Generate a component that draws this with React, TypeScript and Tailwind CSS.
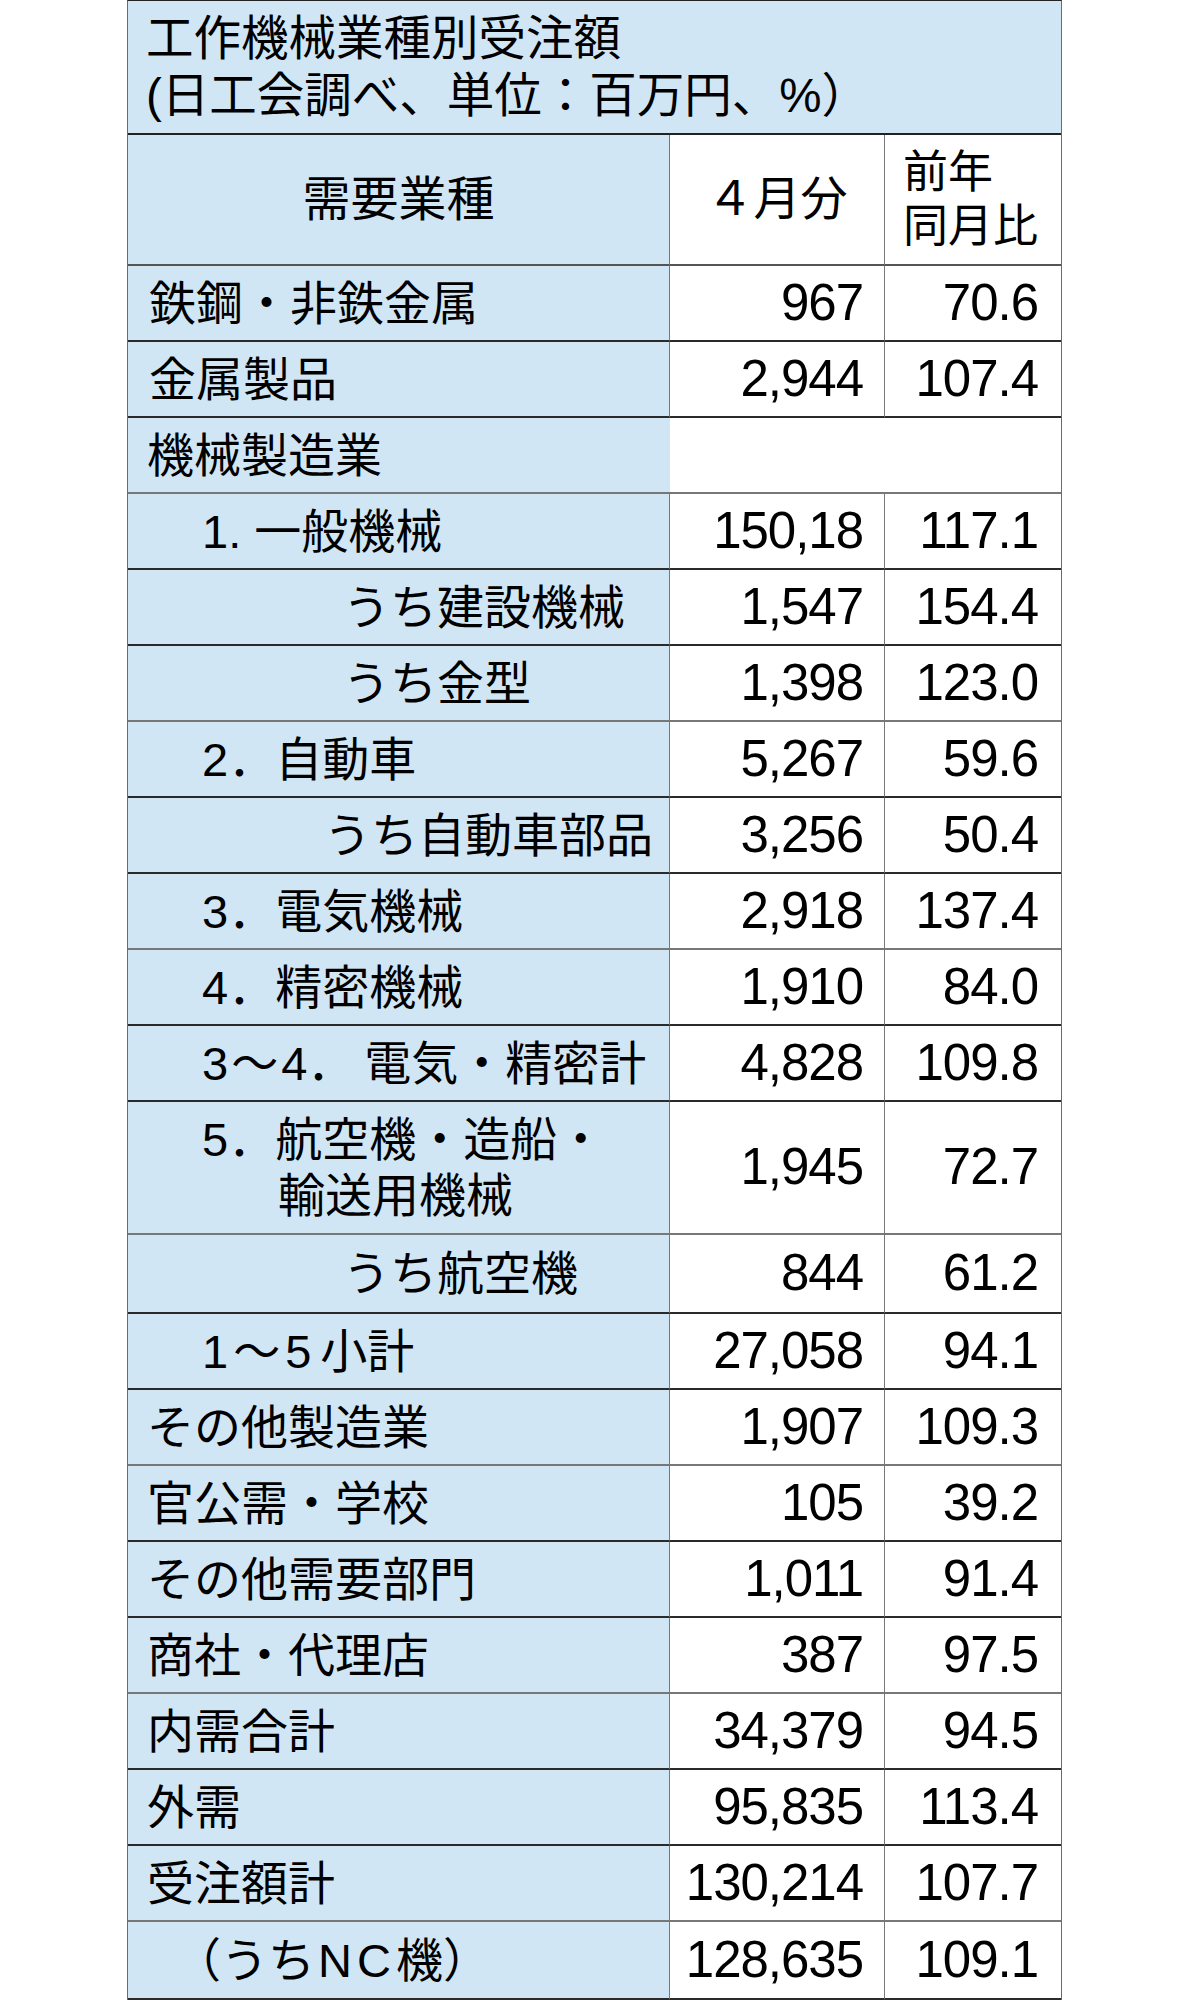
import React from "react";

type Row = {
  label: React.ReactNode;
  pad: string;
  amount?: string;
  ratio?: string;
  h?: string;
  merged?: boolean;
};

const rows: Row[] = [
  { label: "鉄鋼・非鉄金属", pad: "pl-[21px]", amount: "967", ratio: "70.6" },
  { label: "金属製品", pad: "pl-[21px]", amount: "2,944", ratio: "107.4" },
  { label: "機械製造業", pad: "pl-[19px]", merged: true },
  { label: "1. 一般機械", pad: "pl-[74px]", amount: "150,18", ratio: "117.1" },
  { label: "うち建設機械", pad: "pl-[215px]", amount: "1,547", ratio: "154.4" },
  { label: "うち金型", pad: "pl-[215px]", amount: "1,398", ratio: "123.0" },
  { label: "2．自動車", pad: "pl-[74px]", amount: "5,267", ratio: "59.6" },
  { label: "うち自動車部品", pad: "pl-[196px]", amount: "3,256", ratio: "50.4" },
  { label: "3．電気機械", pad: "pl-[74px]", amount: "2,918", ratio: "137.4" },
  { label: "4．精密機械", pad: "pl-[74px]", amount: "1,910", ratio: "84.0" },
  {
    label: (
      <span>
        3<span className="px-[3px]">～</span>4<span className="pr-[10px]">．</span>電気・精密計
      </span>
    ),
    pad: "pl-[74px]",
    amount: "4,828",
    ratio: "109.8",
  },
  {
    label: (
      <span className="flex flex-col leading-[56px]">
        <span>5．航空機・造船・</span>
        <span className="pl-[76px]">輸送用機械</span>
      </span>
    ),
    pad: "pl-[74px]",
    amount: "1,945",
    ratio: "72.7",
    h: "h-[133px]",
  },
  { label: "うち航空機", pad: "pl-[215px]", amount: "844", ratio: "61.2", h: "h-[79px]" },
  {
    label: (
      <span>
        1<span className="px-[5px]">～</span>5<span className="pl-[9px]">小計</span>
      </span>
    ),
    pad: "pl-[74px]",
    amount: "27,058",
    ratio: "94.1",
  },
  { label: "その他製造業", pad: "pl-[19px]", amount: "1,907", ratio: "109.3" },
  { label: "官公需・学校", pad: "pl-[19px]", amount: "105", ratio: "39.2" },
  { label: "その他需要部門", pad: "pl-[19px]", amount: "1,011", ratio: "91.4" },
  { label: "商社・代理店", pad: "pl-[19px]", amount: "387", ratio: "97.5" },
  { label: "内需合計", pad: "pl-[19px]", amount: "34,379", ratio: "94.5" },
  { label: "外需", pad: "pl-[19px]", amount: "95,835", ratio: "113.4" },
  { label: "受注額計", pad: "pl-[19px]", amount: "130,214", ratio: "107.7" },
  {
    label: (
      <span>
        （うち<span className="ml-[3px] tracking-[5px]">NC</span>機）
      </span>
    ),
    pad: "pl-[46px]",
    amount: "128,635",
    ratio: "109.1",
    h: "h-[78px]",
  },
];

const jp = "font-['Liberation_Sans','Noto_Sans_CJK_JP',sans-serif]";
const num = "font-['Liberation_Sans',Arial,sans-serif] text-[51px] tracking-[-0.02em]";

export default function App() {
  return (
    <div className="w-full bg-white">
      <div className={`mx-auto w-[935px] border-x border-t border-x-[#6b6b6b] border-t-[#222] text-black ${jp}`}>
        {/* title */}
        <div className="flex h-[134px] items-center border-b-2 border-[#222] bg-[#d1e6f5] pl-[18px] text-[47.5px] leading-[57px]">
          <div>
            工作機械業種別受注額
            <br />
            <span>(日工会調べ、単位：百万円、%）</span>
          </div>
        </div>

        {/* header */}
        <div className="grid h-[131px] grid-cols-[542px_215px_176px]">
          <div className="flex items-center justify-center overflow-hidden border-r border-b-2 border-r-[#777] border-b-[#555] bg-[#d1e6f5] text-[48px]">
            需要業種
          </div>
          <div className="flex items-center justify-center overflow-hidden border-r border-b-2 border-r-[#777] border-b-[#555] text-[47px]">
            ４月分
          </div>
          <div className="flex flex-col justify-center overflow-hidden border-b-2 border-[#555] pl-[18px] text-[45px] leading-[54px]">
            <span>前年</span>
            <span>同月比</span>
          </div>
        </div>

        {rows.map((r, i) => {
          const line = i % 3 === 2 ? "border-b-[#777]" : "border-b-[#2a2a2a]";
          return (
            <div key={i} className={`grid grid-cols-[542px_215px_176px] ${r.h ?? "h-[76px]"}`}>
              <div
                className={`flex items-center overflow-hidden whitespace-nowrap border-b-2 bg-[#d1e6f5] text-[47px] leading-none ${line} ${r.pad} ${r.merged ? "" : "border-r border-r-[#777]"}`}
              >
                {r.label}
              </div>
              {r.merged ? (
                <div className={`col-span-2 border-b-2 ${line}`} />
              ) : (
                <>
                  <div
                    className={`flex items-center justify-end overflow-hidden border-r border-b-2 border-r-[#777] pr-[21px] ${line} ${num}`}
                  >
                    {r.amount}
                  </div>
                  <div className={`flex items-center justify-end overflow-hidden border-b-2 pr-[23px] ${line} ${num}`}>
                    {r.ratio}
                  </div>
                </>
              )}
            </div>
          );
        })}
      </div>
    </div>
  );
}
